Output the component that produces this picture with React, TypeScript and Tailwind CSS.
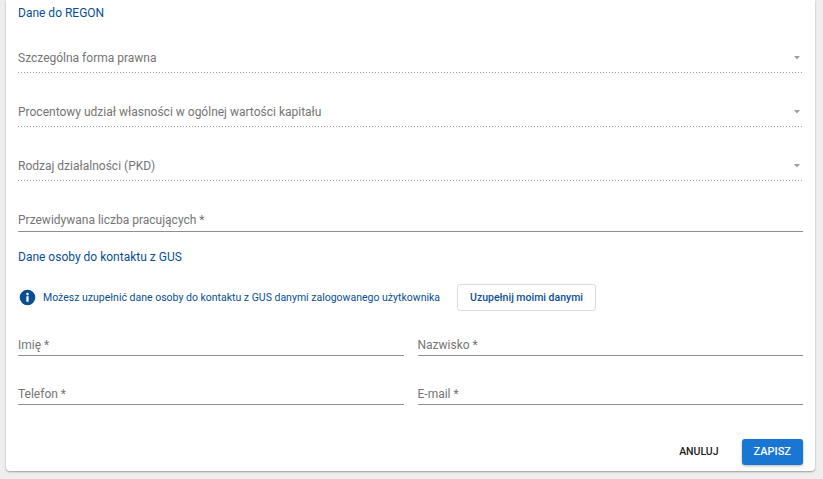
import React from "react";

const Arrow = () => (
  <svg width="6" height="4" viewBox="0 0 6 4" className="shrink-0">
    <path d="M0 0 H6 L3 3.5 Z" fill="#a0a0a0" />
  </svg>
);

const Dotted = () => (
  <div className="h-px w-full bg-[repeating-linear-gradient(to_right,#9e9e9e_0_1px,transparent_1px_3px)]" />
);

const SelectField = ({ label, pt }: { label: string; pt: string }) => (
  <div className={pt}>
    <div className="flex items-center justify-between h-[14px] leading-[14px] text-[12px] text-[#757575]">
      <span>{label}</span>
      <span className="pr-[3px]"><Arrow /></span>
    </div>
    <div className="h-[7px]" />
    <Dotted />
  </div>
);

const InputField = ({ label }: { label: string }) => (
  <div>
    <div className="h-[14px] leading-[14px] text-[12px] text-[#757575]">{label}</div>
    <div className="h-[3px]" />
    <div className="h-px w-full bg-[#8f8f8f]" />
  </div>
);

export default function App() {
  return (
    <div className="min-h-[479px] bg-[#eeeeee] pl-[6px] pr-[8px] pb-[8px]" style={{ fontFamily: "Roboto, 'Liberation Sans', sans-serif" }}>
      <div className="bg-white rounded-b-[4px] shadow-[0_1px_2px_rgba(0,0,0,0.35)] px-[12px] pb-[6px]">
        <div className="h-[26px] flex items-center text-[12px] text-[#0b4f93]">Dane do REGON</div>

        <SelectField label="Szczególna forma prawna" pt="pt-[25px]" />
        <SelectField label="Procentowy udział własności w ogólnej wartości kapitału" pt="pt-[32px]" />
        <SelectField label="Rodzaj działalności (PKD)" pt="pt-[32px]" />

        <div className="pt-[32px]">
          <div className="h-[14px] leading-[14px] text-[12px] text-[#757575]">Przewidywana liczba pracujących *</div>
          <div className="h-[4px]" />
          <div className="h-px w-full bg-[#8f8f8f]" />
        </div>

        <div className="mt-[18px] h-[14px] leading-[14px] text-[12px] text-[#0b4f93]">Dane osoby do kontaktu z GUS</div>

        <div className="mt-[20px] flex items-center h-[27px]">
          <svg width="17" height="17" viewBox="0 0 24 24" className="ml-[1px] shrink-0">
            <circle cx="12" cy="12" r="11" fill="#0b4f93" />
            <rect x="10.4" y="10.2" width="3.2" height="7.8" rx="0.4" fill="#fff" />
            <circle cx="12" cy="7.2" r="1.8" fill="#fff" />
          </svg>
          <span className="ml-[7px] text-[10.5px] text-[#0b4f93]">Możesz uzupełnić dane osoby do kontaktu z GUS danymi zalogowanego użytkownika</span>
          <button className="ml-[17px] h-[27px] px-[12px] border border-[#dcdcdc] rounded-[3px] bg-white text-[10.5px] font-medium text-[#0b4f93]">Uzupełnij moimi danymi</button>
        </div>

        <div className="mt-[27px] grid grid-cols-2 gap-x-[14px]">
          <InputField label="Imię *" />
          <InputField label="Nazwisko *" />
        </div>
        <div className="mt-[31px] grid grid-cols-2 gap-x-[14px]">
          <InputField label="Telefon *" />
          <InputField label="E-mail *" />
        </div>

        <div className="mt-[34px] flex justify-end items-center gap-[12px]">
          <button className="h-[26px] px-[11px] text-[10.5px] font-medium text-[#212121] uppercase">Anuluj</button>
          <button className="h-[26px] px-[12px] rounded-[3px] bg-[#1976d2] text-white text-[11px] font-medium uppercase shadow-[0_1px_3px_rgba(0,0,0,0.3)]">Zapisz</button>
        </div>
      </div>
    </div>
  );
}
